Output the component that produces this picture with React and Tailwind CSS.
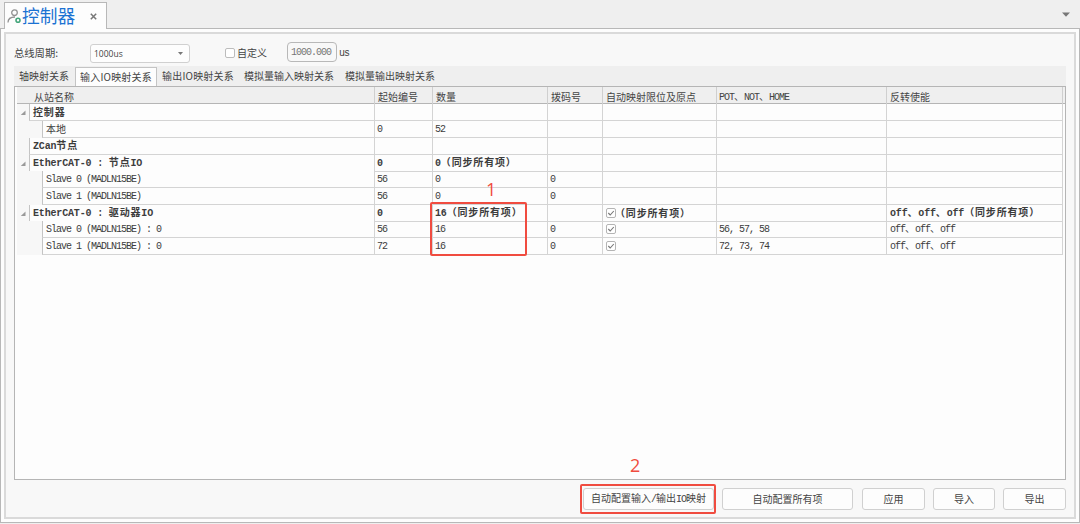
import React from 'react';
import clsx from 'clsx';

const TABS = ['轴映射关系', '输入IO映射关系', '输出IO映射关系', '模拟量输入映射关系', '模拟量输出映射关系'];

const HEADERS = ['从站名称', '起始编号', '数量', '拨码号', '自动映射限位及原点', 'POT、NOT、HOME', '反转使能'];

const ROWS = [
    { name: '控制器', group: true, open: true, h: 'h-[17px]' },
    { name: '本地', start: '0', count: '52', h: 'h-[17px]' },
    { name: 'ZCan节点', group: true, h: 'h-[17px]' },
    { name: 'EtherCAT-0 : 节点IO', group: true, open: true, start: '0', count: '0（同步所有项）', h: 'h-[16px]' },
    { name: 'Slave 0 (MADLN15BE)', start: '56', count: '0', dial: '0', h: 'h-[17px]' },
    { name: 'Slave 1 (MADLN15BE)', start: '56', count: '0', dial: '0', h: 'h-[17px]' },
    { name: 'EtherCAT-0 : 驱动器IO', group: true, open: true, start: '0', count: '16（同步所有项）', auto: '（同步所有项）', checked: true, invert: 'off、off、off（同步所有项）', h: 'h-[16px]' },
    { name: 'Slave 0 (MADLN15BE) : 0', start: '56', count: '16', dial: '0', checked: true, pot: '56, 57, 58', invert: 'off、off、off', h: 'h-[17px]' },
    { name: 'Slave 1 (MADLN15BE) : 0', start: '72', count: '16', dial: '0', checked: true, pot: '72, 73, 74', invert: 'off、off、off', h: 'h-[17px]' },
];

const GRID = 'grid grid-cols-[358px_58px_115px_55px_114px_170px_176px]';

// Half-width characters take exactly half of a CJK cell
const Mixed = ({ text = '', bold }) => (
    <span className={clsx('whitespace-pre', bold && 'font-bold tracking-[0.83px]')}>
        {text.split(/([\x20-\x7e]+)/).filter(Boolean).map((part, i) => (
            /^[\x20-\x7e]/.test(part)
                ? <span key={i} className={clsx("font-['Liberation_Mono','Noto_Sans_CJK_SC',monospace]", bold ? 'tracking-[-0.17px]' : 'tracking-[-1px]')}>{part}</span>
                : <span key={i}>{part}</span>
        ))}
    </span>
);

const Check = () => (
    <svg className="shrink-0" width="10" height="10" viewBox="0 0 10 10" fill="none">
        <rect x="0.5" y="0.5" width="9" height="9" rx="1.5" fill="#fff" stroke="#b4b4b4" />
        <path d="M2.3 5 L4.2 7 L7.8 3" stroke="#777" strokeWidth="1.1" />
    </svg>
);

const Cell = ({ children }) => (
    <div className="flex items-center border-r border-b border-[#d4d4d4] pl-[2px]">{children}</div>
);

const Row = ({ row }) => (
    <div className={clsx(GRID, row.h, 'text-[#3c3c3c]')}>
        <div className="flex bg-[#f7f7f7]">
            <div className={clsx('flex shrink-0 items-center pl-[3px]', row.group ? 'w-[12px]' : 'w-[25px]')}>
                {row.open && (
                    <svg width="6" height="6" viewBox="0 0 6 6"><path d="M5.5 0.5 V5 H0.8 Z" fill="#999" /></svg>
                )}
            </div>
            <div className="flex flex-1 items-center border-r border-b border-l border-[#d4d4d4] border-l-[#c4c4c4] bg-[#fdfdfd] pl-[3px]">
                <Mixed text={row.name} bold={row.group} />
            </div>
        </div>
        <Cell><Mixed text={row.start} bold={row.group} /></Cell>
        <Cell><Mixed text={row.count} bold={row.group} /></Cell>
        <Cell><Mixed text={row.dial} /></Cell>
        <Cell>
            {row.checked && <span className="pl-px"><Check /></span>}
            <span className="-ml-px"><Mixed text={row.auto} bold={row.group} /></span>
        </Cell>
        <Cell><Mixed text={row.pot} /></Cell>
        <Cell><span className="pl-px"><Mixed text={row.invert} bold={row.group} /></span></Cell>
    </div>
);

const Button = ({ label, className }) => (
    <button className={clsx('flex h-[22px] items-center justify-center rounded-[3px] border border-[#d0d0d0] bg-[#fdfdfd]', className)}>
        <Mixed text={label} />
    </button>
);

const TitleBar = () => (
    <div className="flex h-[28px] items-end justify-between bg-[#efefef] pl-[4px]">
        <div className="relative -mb-px flex h-[27px] w-[103px] items-center border border-b-0 border-[#b8b8b8] bg-[#fdfdfd] pl-[2px]">
            <svg width="15" height="15" viewBox="0 0 15 15" fill="none" stroke="#929292" strokeWidth="1.3">
                <circle cx="7.5" cy="3.7" r="2.8" />
                <path d="M1 13.5 C1 9.5 4 8 8 8" />
                <circle cx="11" cy="11.3" r="2" stroke="#45a67c" strokeWidth="1.6" />
            </svg>
            <span className="text-[17.7px] leading-none text-[#1b72d2]">控制器</span>
            <svg className="ml-[15px]" width="7" height="7" viewBox="0 0 7 7" stroke="#777" strokeWidth="1.5">
                <path d="M0.8 0.8 L6.2 6.2 M6.2 0.8 L0.8 6.2" />
            </svg>
        </div>
        <svg className="mr-[10px] mb-[11px]" width="8" height="5" viewBox="0 0 8 5"><path d="M0 0.5 H8 L4 4.7 Z" fill="#777" /></svg>
    </div>
);

const Toolbar = () => (
    <div className="flex h-[32px] items-center pt-[5px] pl-[8px]">
        <span className="w-[76px] text-[10.3px]">总线周期:</span>
        <div className="mt-[2px] flex h-[19px] w-[100px] items-center justify-between rounded-[3px] border border-[#d0d0d0] bg-[#fdfdfd] pr-[6px] pl-[3px] font-['Open_Sans',sans-serif] text-[8.5px]">
            <span>1000us</span>
            <svg width="5" height="3" viewBox="0 0 5 3"><path d="M0 0 H5 L2.5 3 Z" fill="#777" /></svg>
        </div>
        <div className="ml-[35px] h-[10px] w-[10px] rounded-[2px] border border-[#bcbcbc] bg-white" />
        <span className="ml-[2px] w-[50px]">自定义</span>
        <div className="-mt-px flex h-[20px] w-[50px] items-center rounded-[4px] border border-[#b8b8b8] pl-[3px] text-[#777]">
            <Mixed text="1000.000" />
        </div>
        <span className="ml-[2px]"><Mixed text="us" /></span>
    </div>
);

export default function App() {
    return (
        <div className="relative flex h-[524px] w-[1080px] flex-col overflow-hidden bg-[#efefef] font-['Noto_Sans_CJK_SC',sans-serif] text-[10px] leading-[14px] text-[#444]">
            <TitleBar />
            <div className="h-[495px] border border-[#b8b8b8] bg-[#fdfdfd] p-[3px]">
                <div className="flex h-full flex-col border-2 border-[#dadada] bg-[#f8f8f8]">
                    <Toolbar />
                    <div className="mx-[8px] flex h-[20px] bg-[#efefef]">
                        {TABS.map((tab, i) => (
                            <div
                                key={tab}
                                className={clsx(
                                    'flex items-center whitespace-nowrap',
                                    i === 0 && 'w-[61px] pl-[5px]',
                                    i === 1 && 'mt-px w-[82px] border border-b-0 border-[#c4c4c4] bg-[#fdfdfd] pl-[4px] tracking-[0.2px]',
                                    i === 2 && 'w-[82px] pl-[5px] tracking-[0.2px]',
                                    i > 2 && 'w-[101px] pl-[5px]'
                                )}
                            >
                                {tab}
                            </div>
                        ))}
                    </div>
                    <div className="mx-[8px] h-[394px] border border-[#b5b5b5] bg-[#fdfdfd] pl-[2px]">
                        <div className={clsx(GRID, 'h-[17px] border-b border-[#b5b5b5] bg-[#efefef]')}>
                            {HEADERS.map((label, i) => (
                                <div key={label} className={clsx('flex items-center border-r border-[#cfcfcf] pt-[2px]', i === 0 ? 'pl-[17px]' : i === 5 ? 'pl-[2px]' : 'pl-[3px]')}>
                                    <Mixed text={label} />
                                </div>
                            ))}
                        </div>
                        {ROWS.map((row) => <Row key={row.name + row.start} row={row} />)}
                    </div>
                    <div className="flex justify-end pt-[8px] pr-[8px]">
                        <Button label="自动配置输入/输出IO映射" className="mr-[8px] w-[131px]" />
                        <Button label="自动配置所有项" className="mr-[9px] w-[131px]" />
                        <Button label="应用" className="mr-[8px] w-[63px]" />
                        <Button label="导入" className="mr-[8px] w-[62px]" />
                        <Button label="导出" className="w-[63px]" />
                    </div>
                </div>
            </div>

            {/* Step annotations */}
            <div className="absolute top-[202px] left-[430px] h-[54px] w-[97px] rounded-[2px] border-2 border-[#f04c40]" />
            <div className="absolute top-[179px] left-[486px] font-['Open_Sans',sans-serif] text-[18px] leading-[20px] text-[#f04c40]">1</div>
            <div className="absolute top-[484px] left-[580px] h-[30px] w-[136px] rounded-[2px] border-2 border-[#f04c40]" />
            <div className="absolute top-[455px] left-[630px] font-['Open_Sans',sans-serif] text-[18px] leading-[20px] text-[#f04c40]">2</div>
        </div>
    );
}
